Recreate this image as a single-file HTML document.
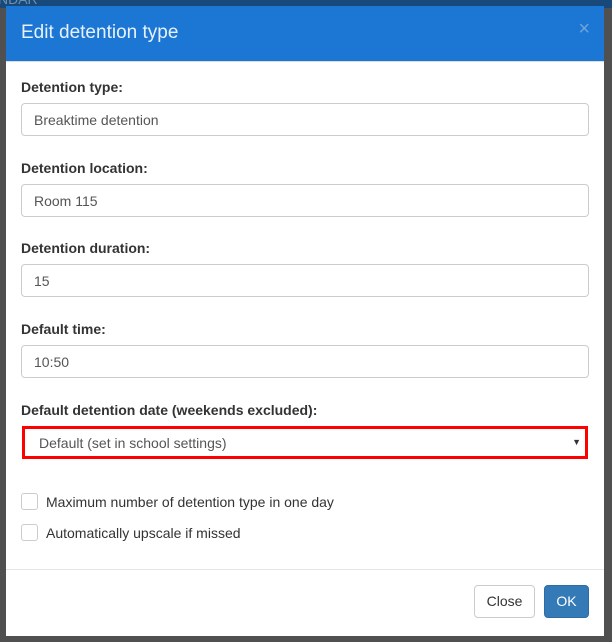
<!DOCTYPE html>
<html><head><style>
body{margin:0;width:612px;height:642px;background:#505050;position:relative;overflow:hidden;font-family:"Liberation Sans",sans-serif;}
.top{position:absolute;left:0;top:0;width:612px;height:8px;background:#17497a;}
.top span{position:absolute;left:-2px;top:-9px;color:#6f8fae;font-size:14px;}
.modal{position:absolute;left:6px;top:6px;width:598px;height:630px;background:#fff;}
.hdr{height:55px;background:#1b77d3;border-bottom:1px solid #ddd;position:relative;}
.hdr h4{margin:0;position:absolute;left:15px;top:16px;color:#e8f1fb;font-size:19px;font-weight:normal;}
.hdr .x{position:absolute;right:14px;top:12px;color:#6ea4dc;font-size:20px;}
label{position:absolute;left:15px;font-size:14px;font-weight:bold;color:#333;}
.in{position:absolute;left:15px;width:568px;border:1px solid #ccc;border-radius:4px;box-sizing:border-box;height:33px;font-size:14px;color:#555;padding:8px 12px;}
.sel{position:absolute;left:16px;top:420px;width:566px;height:33px;border:3px solid #f00;box-sizing:border-box;font-size:14px;color:#555;padding:6px 14px;}
.sel .a{position:absolute;right:4px;top:8px;font-size:9px;color:#333;}
.cb{position:absolute;left:15px;width:15px;height:15px;border:1px solid #ccc;border-radius:3px;}
.ct{position:absolute;left:40px;font-size:14px;color:#333;}
.line{position:absolute;left:0;top:563px;width:598px;height:1px;background:#e5e5e5;}
.btn{position:absolute;top:579px;height:33px;box-sizing:border-box;border-radius:4px;font-size:14px;text-align:center;line-height:31px;}
</style></head><body>
<div class="top"><span>NDAR</span></div>
<div class="modal">
<div class="hdr"><h4>Edit detention type</h4><span class="x">×</span></div>
<label style="top:73px">Detention type:</label>
<div class="in" style="top:97px">Breaktime detention</div>
<label style="top:154px">Detention location:</label>
<div class="in" style="top:178px">Room 115</div>
<label style="top:234px">Detention duration:</label>
<div class="in" style="top:258px">15</div>
<label style="top:315px">Default time:</label>
<div class="in" style="top:339px">10:50</div>
<label style="top:396px">Default detention date (weekends excluded):</label>
<div class="sel">Default (set in school settings)<span class="a">▼</span></div>
<div class="cb" style="top:487px"></div><div class="ct" style="top:488px">Maximum number of detention type in one day</div>
<div class="cb" style="top:518px"></div><div class="ct" style="top:519px">Automatically upscale if missed</div>
<div class="line"></div>
<div class="btn" style="left:468px;width:61px;border:1px solid #ccc;color:#333;">Close</div>
<div class="btn" style="left:538px;width:45px;background:#337ab7;border:1px solid #2e6da4;color:#fff;">OK</div>
</div>
</body></html>
